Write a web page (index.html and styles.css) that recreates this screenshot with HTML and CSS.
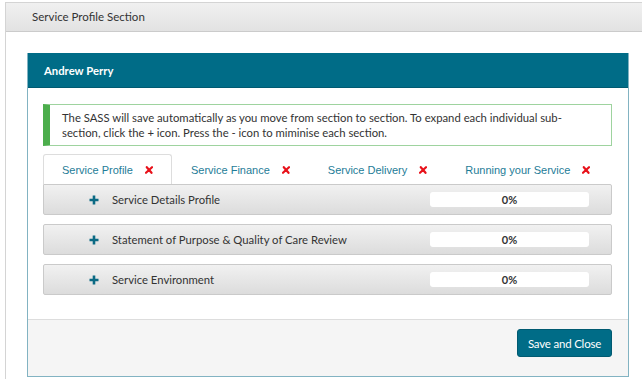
FILE: index.html
```html
<!DOCTYPE html>
<html lang="en">
<head>
    <meta charset="UTF-8">
    <title>Service Profile Section</title>
    <link rel="stylesheet" href="styles.css">
</head>
<body>
    <div class="panel">
        <div class="panel-heading">Service Profile Section</div>
        <div class="panel-body">
            <div class="modal">
                <div class="modal-header">Andrew Perry</div>
                <div class="modal-body">
                    <div class="alert">
                        The SASS will save automatically as you move from section to section. To expand each individual sub-section, click the + icon. Press the - icon to miminise each section.
                    </div>

                    <div class="tabs">
                        <div class="tab active">Service Profile <span class="cross"><svg width="8" height="8" viewBox="0 0 8 8"><path d="M1.8 1.2 L6.5 6.8 M7 1.2 L1 6.8" stroke="#e8121b" stroke-width="2.2" stroke-linecap="round"/></svg></span></div>
                        <div class="tab">Service Finance <span class="cross"><svg width="8" height="8" viewBox="0 0 8 8"><path d="M1.8 1.2 L6.5 6.8 M7 1.2 L1 6.8" stroke="#e8121b" stroke-width="2.2" stroke-linecap="round"/></svg></span></div>
                        <div class="tab">Service Delivery <span class="cross"><svg width="8" height="8" viewBox="0 0 8 8"><path d="M1.8 1.2 L6.5 6.8 M7 1.2 L1 6.8" stroke="#e8121b" stroke-width="2.2" stroke-linecap="round"/></svg></span></div>
                        <div class="tab">Running your Service <span class="cross"><svg width="8" height="8" viewBox="0 0 8 8"><path d="M1.8 1.2 L6.5 6.8 M7 1.2 L1 6.8" stroke="#e8121b" stroke-width="2.2" stroke-linecap="round"/></svg></span></div>
                    </div>

                    <div class="section-row first">
                        <span class="plus"><svg width="10" height="10" viewBox="0 0 10 10"><path d="M5 0.5 V9.5 M0.5 5 H9.5" stroke="#0b6a84" stroke-width="2.6"/></svg></span>
                        <span class="section-title">Service Details Profile</span>
                        <span class="progress">0%</span>
                    </div>
                    <div class="section-row">
                        <span class="plus"><svg width="10" height="10" viewBox="0 0 10 10"><path d="M5 0.5 V9.5 M0.5 5 H9.5" stroke="#0b6a84" stroke-width="2.6"/></svg></span>
                        <span class="section-title">Statement of Purpose &amp; Quality of Care Review</span>
                        <span class="progress">0%</span>
                    </div>
                    <div class="section-row">
                        <span class="plus"><svg width="10" height="10" viewBox="0 0 10 10"><path d="M5 0.5 V9.5 M0.5 5 H9.5" stroke="#0b6a84" stroke-width="2.6"/></svg></span>
                        <span class="section-title">Service Environment</span>
                        <span class="progress">0%</span>
                    </div>
                </div>
                <div class="modal-footer">
                    <button class="btn-save">Save and Close</button>
                </div>
            </div>
        </div>
    </div>
</body>
</html>
```

FILE: styles.css
```css
body {
    margin: 0;
    overflow: hidden;
    background-color: white;
    font-family: Lato, "Open Sans", sans-serif;
    font-size: 11.3px;
    color: #333;
}
.panel {
    margin: 2px 0 0 5px;
    width: 660px;
    height: 377px;
    border: 1px solid #d4d4d4;
    border-bottom: none;
    box-sizing: border-box;
}
.panel-heading {
    height: 28px;
    line-height: 28px;
    padding-left: 26px;
    background: linear-gradient(#f0f0f0, #e2e2e2);
    border-bottom: 1px solid #cbcbcb;
    color: #333;
    font-size: 11.5px;
}
.panel-body {
    padding: 21px 0 0 21px;
}
.modal {
    width: 600px;
    border: 1px solid #82b3c2;
    border-top: none;
}
.modal-header {
    height: 34px;
    line-height: 36px;
    padding-left: 16px;
    background-color: #006c87;
    border-bottom: 1px solid #005a71;
    color: white;
    font-weight: bold;
}
.modal-body {
    padding: 16px 16px 24px 15px;
}
.alert {
    border: 1px solid #9ed39f;
    border-left: 7px solid #4cae4c;
    padding: 5px 12px 5px 12px;
    line-height: 15px;
    color: #333;
}
.tabs {
    display: flex;
    margin-top: 8px;
    height: 30px;
    font-family: "Liberation Sans", Arial, sans-serif;
    font-size: 11px;
    color: #1e7c97;
}
.tab {
    display: flex;
    align-items: center;
    padding: 0 18px 0 18px;
    border: 1px solid transparent;
    border-bottom: none;
}
.tab.active {
    background-color: white;
    border-color: #ddd;
    border-radius: 3px 3px 0 0;
}
.cross {
    display: flex;
    margin-left: 12px;
}
.section-row {
    display: flex;
    align-items: center;
    height: 29px;
    margin-bottom: 9px;
    background: linear-gradient(#f1f1f1, #dcdcdc);
    border: 1px solid #cacaca;
    border-radius: 2px;
}
.section-row.first {
    border-top-left-radius: 0;
}
.section-row:last-child {
    margin-bottom: 0;
}
.plus {
    display: flex;
    margin-left: 45px;
    width: 23px;
}
.section-title {
    flex: 1;
    color: #333;
}
.progress {
    width: 159px;
    height: 15px;
    line-height: 15px;
    margin-right: 22px;
    background-color: white;
    border-radius: 3px;
    text-align: center;
    font-weight: bold;
    font-size: 11px;
    color: #333;
}
.modal-footer {
    display: flex;
    justify-content: flex-end;
    padding: 9px 16px 19px 0;
    background-color: #f5f5f5;
    border-top: 1px solid #ddd;
}
.btn-save {
    width: 95px;
    height: 28px;
    padding: 0;
    background-color: #006c87;
    color: white;
    border: 1px solid #005a71;
    border-radius: 3px;
    font-family: Lato, sans-serif;
    font-size: 11.5px;
    letter-spacing: -0.2px;
}
```
